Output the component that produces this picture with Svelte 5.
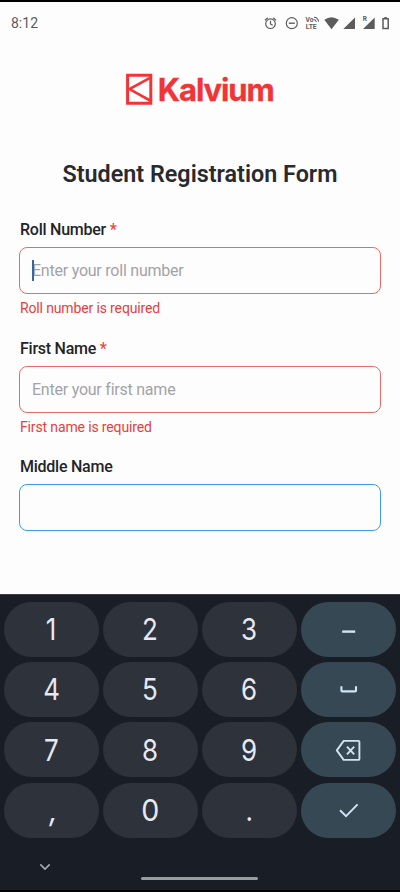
<script>
  const fields = [
    { label: 'Roll Number', required: true, placeholder: 'Enter your roll number', error: 'Roll number is required', caret: true },
    { label: 'First Name', required: true, placeholder: 'Enter your first name', error: 'First name is required' },
    { label: 'Middle Name', active: true }
  ];
  const keys = ['1', '2', '3', 'dash', '4', '5', '6', 'space', '7', '8', '9', 'back', ',', '0', '.', 'done'];
  const actions = ['dash', 'space', 'back', 'done'];
</script>

<div class="screen">
  <header class="status">
    <span class="time">8:12</span>
    <svg class="tray" width="128" height="20" viewBox="264 13 128 20" fill="none" stroke="#5c5c5e" stroke-width="1.2">
      <circle cx="270.5" cy="23.7" r="4.8" />
      <path d="M270.5 20.7v3.2l2.2 1.4M265 20.2l2.8-2.4M276 20.2l-2.8-2.4" />
      <circle cx="291.8" cy="23.2" r="5.5" />
      <path d="M288.8 23.2h6" stroke-width="1.4" />
      <g class="tiny">
        <text x="305.5" y="21.8" textLength="8">Vo</text>
        <text x="305.8" y="29" textLength="10.8">LTE</text>
      </g>
      <path d="M314 17.3q3.8 .1 4.6 4.4M313.8 19.5q2 0 2.6 2.3" stroke-width="1.1" />
      <path d="M324.3 19.8Q331.5 14.5 338.8 19.8L331.5 29.2Z" fill="#5c5c5e" stroke="none" />
      <path d="M355 17.5V29H343.3ZM374.7 17.5V29H363Z" fill="#5c5c5e" stroke="none" />
      <path d="M361 15h7v5.6l-4.5 2.5H361z" fill="#fdfdfe" stroke="none" />
      <text class="roam" x="362.7" y="21">R</text>
      <path d="M383 18.8h5.2v9.6H383zM384.4 17.7h2.4" stroke-width="1.5" />
    </svg>
  </header>

  <main>
    <div class="brand">
      <svg width="27" height="32" viewBox="0 0 27 32" fill="none" stroke="#f13435">
        <path d="M1.6 2.3h23.2v27.9H1.6z" stroke-width="3" />
        <path d="M24 4.8L3.5 16.1 24 27.5" stroke-width="2.6" />
      </svg>
      <span>Kalvium</span>
    </div>
    <h1>Student Registration Form</h1>
    <form>
      {#each fields as field}
        <div class="field">
          <div class="label">{field.label}{#if field.required}<b>&nbsp;*</b>{/if}</div>
          <div class="box" class:active={field.active}>
            {#if field.caret}<i class="caret"></i>{/if}
            {field.placeholder ?? ''}
          </div>
          <div class="error">{field.error ?? ''}</div>
        </div>
      {/each}
    </form>
  </main>

  <section class="keyboard">
    <div class="keys">
      {#each keys as key}
        <div class="key" class:action={actions.includes(key)}>
          {#if actions.includes(key)}
            <svg width="28" height="28" viewBox="0 0 28 28" fill="none" stroke="#d0e4f1" stroke-width="1.9">
              {#if key === 'dash'}
                <path d="M7.2 16.6h13" stroke-width="2.4" />
              {:else if key === 'space'}
                <path d="M6.4 11.2v4.2q0 1 1 1h12.6q1 0 1-1v-4.2" stroke-width="2.1" />
              {:else if key === 'back'}
                <path d="M8.7 4.9H23.4q1 0 1 1v17q0 1-1 1H8.7L1.8 14.4zM12 10.6l7.2 7.8M19.2 10.6l-7.2 7.8" stroke-linejoin="round" />
              {:else}
                <path d="M5 14.2l6 5.9L22.6 8.4" />
              {/if}
            </svg>
          {:else}
            <span class:wide={key === '0'} class:comma={key === ','}>{key}</span>
          {/if}
        </div>
      {/each}
    </div>
    <div class="nav">
      <svg width="12" height="8" viewBox="0 0 12 8" fill="none" stroke="#a9adb3" stroke-width="1.5"><path d="M1.3 1.4L6 6.1l4.7-4.7" /></svg>
      <div class="home"></div>
    </div>
  </section>
</div>

<style>
  :global(body) { margin: 0; }
  .screen {
    width: 400px; height: 892px; box-sizing: border-box; overflow: hidden;
    border-top: 2px solid #000; border-bottom: 2px solid #000;
    background: #fdfdfe; display: flex; flex-direction: column;
    font-family: Roboto, sans-serif;
  }
  .status {
    height: 42px; padding: 0 8px 0 11px;
    display: flex; align-items: center; justify-content: space-between;
  }
  .time { font-size: 14px; color: #5c5c5e; }
  .tiny text { font-size: 6.8px; font-weight: 700; fill: #5c5c5e; stroke: none; }
  .roam { font-size: 6.5px; font-weight: 700; fill: #5c5c5e; stroke: none; }
  main { flex: 1; padding: 28px 19px 0; }
  .brand {
    display: flex; align-items: center; justify-content: center; gap: 4.5px; height: 34px;
    font: 700 31px/34px Inter, sans-serif; letter-spacing: -1.1px; color: #f13435;
    -webkit-text-stroke: .3px #f13435;
  }
  .brand span { padding-top: 1px; }
  h1 {
    margin: 52px 0 0; height: 32px; text-align: center; white-space: nowrap;
    font-size: 23.35px; line-height: 32px; font-weight: 600; color: #292a2e;
  }
  form { margin: 29px 0 0; }
  .field { height: 118.5px; }
  .label { height: 20px; margin-bottom: 8px; padding-left: 1px; font-size: 16px; line-height: 21px; font-weight: 500; letter-spacing: -.25px; color: #232428; }
  .label b { color: #ee4441; font-weight: 500; }
  .box {
    height: 47px; box-sizing: border-box; border: 1.3px solid #e96b68; border-radius: 8px;
    padding: 0 0 0 12px; display: flex; align-items: center; position: relative;
    font-size: 16px; letter-spacing: -.23px; color: #a3a3a7;
  }
  .box.active { border-color: #3d9cf0; }
  .caret { position: absolute; left: 12px; top: 12px; width: 2px; height: 21px; background: #3568a0; }
  .error { margin-top: 5px; padding-left: 1px; font-size: 14px; line-height: 18px; letter-spacing: -.14px; color: #e5403d; }
  .keyboard { height: 296px; flex: none; background: #191e26; border-top: 1px solid #3b3e43; box-sizing: border-box; }
  .keys {
    padding: 6.5px 4px 0; display: grid; grid-template-columns: repeat(4, 1fr);
    grid-auto-rows: 55px; gap: 5.4px 4.5px;
  }
  .key {
    border-radius: 28px; background: #2e323b; color: #e6e8f2;
    display: flex; align-items: center; justify-content: center;
    font: 400 29.5px/36px Inter, sans-serif;
  }
  .key span { transform: scaleX(.88); }
  .key .wide { transform: scaleX(.97); }
  .key .comma { transform: translateX(2.5px) skewX(-8deg); }
  .action { background: #364854; }
  .nav { height: 52px; padding: 0 142px 0 39px; display: flex; align-items: center; justify-content: space-between; }
  .nav svg { margin-top: 7px; }
  .home { width: 117px; height: 3.5px; border-radius: 2px; background: #999ca1; margin-top: 30px; }
</style>
